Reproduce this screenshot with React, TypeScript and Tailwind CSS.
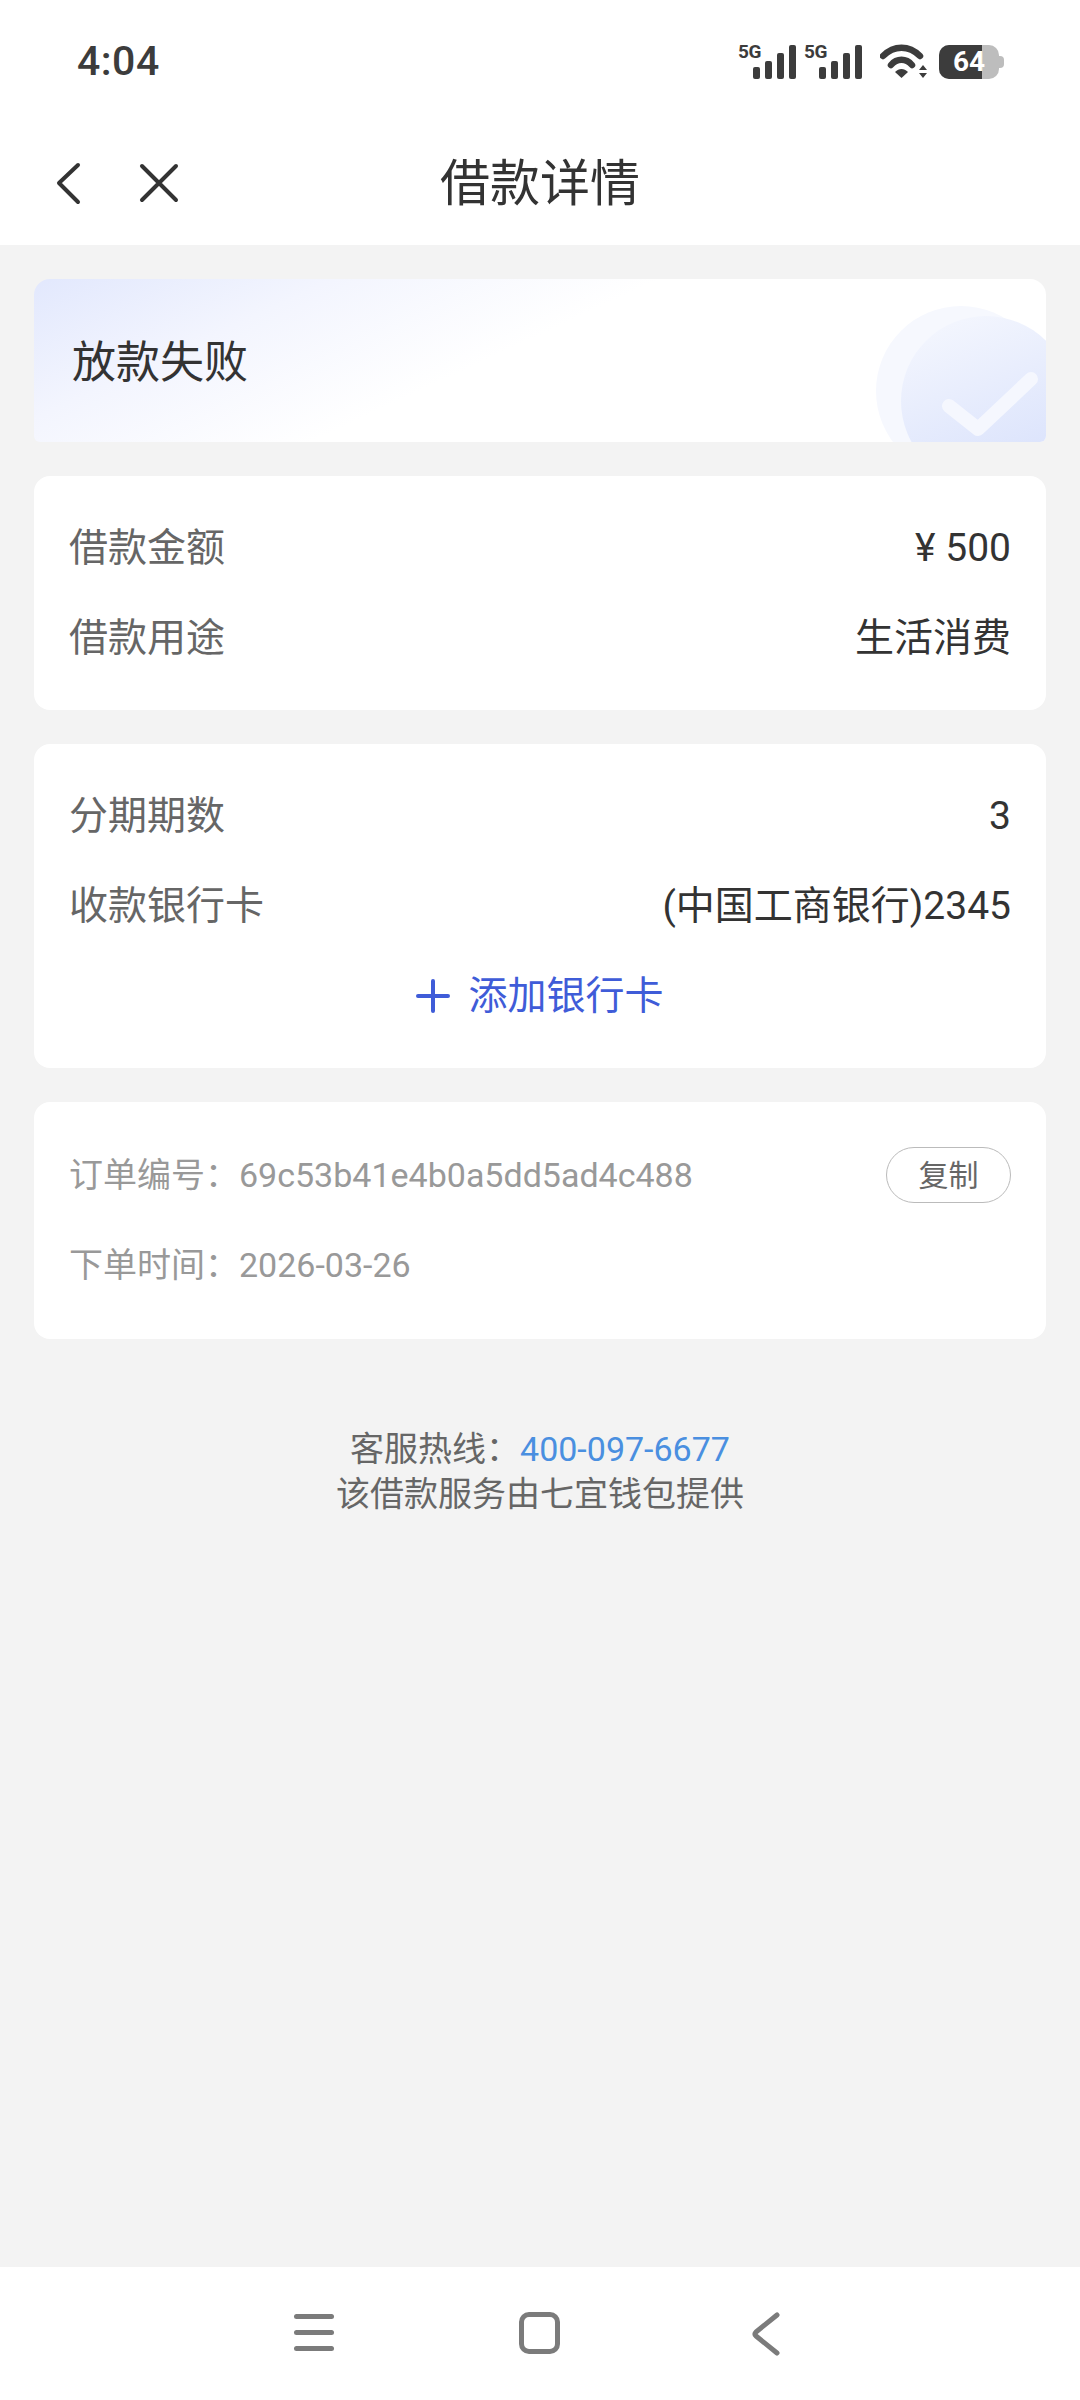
const cjk = "font-['Roboto','Noto_Sans_CJK_SC',sans-serif]";

function SignalIcon() {
  return (
    <div className="relative h-[40px] w-[60px]">
      <span className="absolute left-0 top-0 text-[19px] font-bold leading-[19px] tracking-[-0.5px] text-[#3c3c3c]">5G</span>
      <svg className="absolute left-0 top-0" width="60" height="40" viewBox="0 0 60 40" fill="#3c3c3c">
        <rect x="15" y="25" width="7" height="12" rx="2" />
        <rect x="27" y="19" width="7" height="18" rx="2" />
        <rect x="39" y="11" width="7" height="26" rx="2" />
        <rect x="51" y="3" width="7" height="34" rx="2" />
      </svg>
    </div>
  );
}

function StatusBar() {
  return (
    <div className="flex h-[123px] items-center justify-between pl-[77px] pr-[76px]">
      <span className="text-[41px] font-medium leading-none tracking-[0.5px] text-[#3c3c3c]">4:04</span>
      <div className="flex items-center">
        <SignalIcon />
        <div className="ml-[6px]">
          <SignalIcon />
        </div>
        <svg className="ml-[16px]" width="48" height="36" viewBox="0 0 48 36" fill="none">
          <path d="M3 12 C14 1 29 1 40 12" stroke="#3c3c3c" strokeWidth="6.5" strokeLinecap="round" />
          <path d="M11 21 C17 14 26 14 32 21" stroke="#3c3c3c" strokeWidth="6.5" strokeLinecap="round" />
          <path d="M15 28 C19 24 24 24 28 28 L21.500 34 Z" fill="#3c3c3c" />
          <path d="M43 21 L47 26 L39 26 Z M39 29 L47 29 L43 34 Z" fill="#3c3c3c" />
        </svg>
        <div className="relative ml-[11px] h-[34px] w-[65px]">
          <div className="absolute inset-y-0 left-0 w-[60px] rounded-[10px] bg-[#bdbdbd]" />
          <div className="absolute right-0 top-[11px] h-[12px] w-[6px] rounded-r-[4px] bg-[#bdbdbd]" />
          <div className="absolute inset-y-0 left-0 w-[43px] rounded-l-[10px] bg-[#3c3c3c]" />
          <span className="absolute left-[14px] top-0 text-[28px] font-bold leading-[34px] text-white">64</span>
        </div>
      </div>
    </div>
  );
}

function NavBar() {
  return (
    <div className="relative flex h-[122px] items-start justify-center">
      <svg className="absolute left-[50px] top-[36px]" width="36" height="46" viewBox="0 0 36 46" fill="none">
        <path d="M28 6 L9 24 L28 43" stroke="#333" strokeWidth="4" strokeLinecap="round" strokeLinejoin="round" />
      </svg>
      <svg className="absolute left-[134px] top-[38px]" width="50" height="44" viewBox="0 0 50 44" fill="none">
        <path d="M8 5 L42 39 M42 5 L8 39" stroke="#333" strokeWidth="4" strokeLinecap="round" />
      </svg>
      <span className="mt-[32px] text-[50px] leading-[58px] text-[#333]">借款详情</span>
    </div>
  );
}

function StatusCard() {
  return (
    <div className="relative h-[163px] overflow-hidden rounded-t-[16px] rounded-b-[6px] bg-[linear-gradient(155deg,#e2e8fd_0%,#f3f5fe_22%,#ffffff_46%)]">
      <span className="absolute left-[38px] top-[56px] text-[44px] leading-[56px] text-[#333]">放款失败</span>
      <svg className="absolute right-0 top-0" width="190" height="163" viewBox="0 0 190 163" fill="none">
        <defs>
          <linearGradient id="disc" x1="0" y1="0" x2="0.4" y2="1">
            <stop offset="0" stopColor="#f6f8fe" />
            <stop offset="1" stopColor="#dbe3fc" />
          </linearGradient>
        </defs>
        <circle cx="105" cy="112" r="85" fill="#f6f8fe" />
        <circle cx="130" cy="122" r="85" fill="url(#disc)" />
        <path d="M93 127 L122 150 L175 100" stroke="#f5f7fe" strokeWidth="14" strokeLinecap="round" strokeLinejoin="round" />
      </svg>
    </div>
  );
}

function Row({ label, value }: { label: string; value: string }) {
  return (
    <div className="flex h-[90px] items-center justify-between text-[39px]">
      <span className="text-[#666]">{label}</span>
      <span className="text-[#333]">{value}</span>
    </div>
  );
}

function DetailCard({ children }: { children: React.ReactNode }) {
  return <div className="rounded-[16px] bg-white px-[35px] py-[27px]">{children}</div>;
}

function BottomBar() {
  return (
    <div className="flex h-[133px] items-start bg-white pl-[294px] pt-[45px]">
      <div className="flex w-[40px] flex-col gap-[11px] pt-[2px]">
        <div className="h-[5px] rounded-full bg-[#7b7b7b]" />
        <div className="h-[5px] rounded-full bg-[#7b7b7b]" />
        <div className="h-[5px] rounded-full bg-[#7b7b7b]" />
      </div>
      <div className="ml-[185px] h-[42px] w-[41px] rounded-[10px] border-[5px] border-[#7b7b7b]" />
      <svg className="ml-[191px]" width="30" height="44" viewBox="0 0 30 44" fill="none">
        <path d="M26 3 L5 20 Q3 22 5 24 L26 41" stroke="#7b7b7b" strokeWidth="5" strokeLinecap="round" strokeLinejoin="round" />
      </svg>
    </div>
  );
}

export default function App() {
  return (
    <div className={`flex h-[2400px] w-[1080px] flex-col bg-[#f3f3f3] ${cjk}`}>
      <div className="h-[245px] bg-white">
        <StatusBar />
        <NavBar />
      </div>

      <main className="flex flex-1 flex-col px-[34px] pt-[34px]">
        <div className="flex flex-col gap-[34px]">
          <StatusCard />

          <DetailCard>
            <Row label="借款金额" value="¥ 500" />
            <Row label="借款用途" value="生活消费" />
          </DetailCard>

          <DetailCard>
            <Row label="分期期数" value="3" />
            <Row label="收款银行卡" value="(中国工商银行)2345" />
            <div className="flex h-[90px] items-center justify-center text-[39px] text-[#3f5cd8]">
              <svg className="mr-[18px]" width="34" height="34" viewBox="0 0 34 34" fill="none">
                <path d="M17 2 V32 M2 17 H32" stroke="#3f5cd8" strokeWidth="4" strokeLinecap="round" />
              </svg>
              添加银行卡
            </div>
          </DetailCard>

          <div className="rounded-[16px] bg-white px-[35px] pt-[28px] pb-[29px] text-[34px] text-[#999]">
            <div className="flex h-[90px] items-center justify-between">
              <span>订单编号：69c53b41e4b0a5dd5ad4c488</span>
              <span className="flex h-[56px] w-[125px] items-center justify-center rounded-full border border-[#bbb] text-[30px] text-[#666]">复制</span>
            </div>
            <div className="flex h-[90px] items-center">下单时间：2026-03-26</div>
          </div>
        </div>

        <div className="mt-[88px] flex flex-col items-center text-[34px] leading-[45px] text-[#666]">
          <div>
            客服热线：<span className="text-[#4a8fe0]">400-097-6677</span>
          </div>
          <div>该借款服务由七宜钱包提供</div>
        </div>
      </main>

      <BottomBar />
    </div>
  );
}
